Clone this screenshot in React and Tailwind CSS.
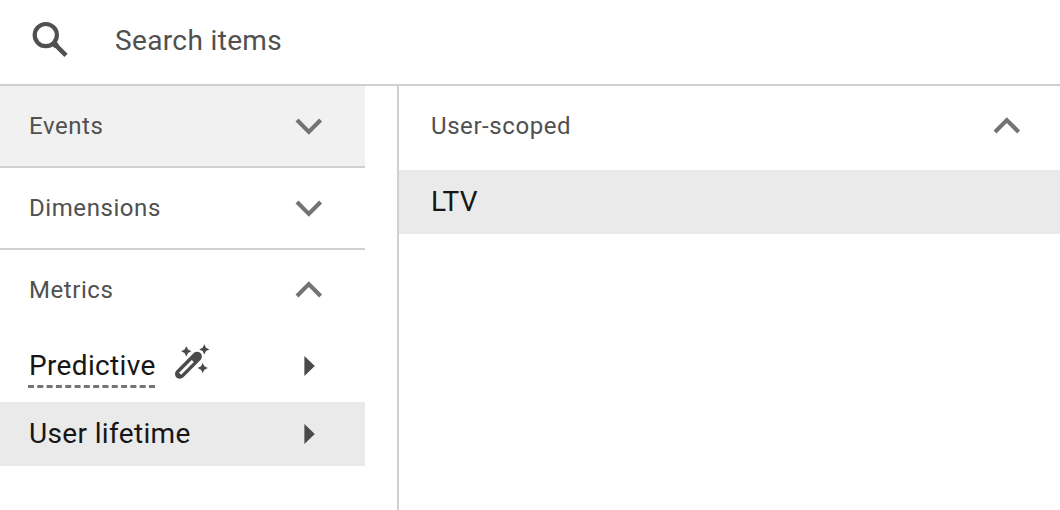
import React from "react";

const SearchIcon = () => (
  <svg width="36" height="36" viewBox="0 0 36 36" fill="none" stroke="#505050">
    <circle cx="13.8" cy="14.1" r="11.1" strokeWidth="4.2" />
    <path d="M20.5 20.9L34 34.4" strokeWidth="4.5" />
    <path d="M21 21.4L24.8 25.2" strokeWidth="5.8" />
  </svg>
);

const Chevron = ({ open }) => (
  <svg
    width="28"
    height="20"
    viewBox="0 0 28 20"
    fill="none"
    stroke="#737373"
    strokeWidth="4.2"
  >
    <path d={open ? "M2 15.9L13.8 4.1L25.6 15.9" : "M2 4.1L13.8 15.9L25.6 4.1"} />
  </svg>
);

const Arrow = () => (
  <svg width="12" height="20" viewBox="0 0 12 20" fill="#4a4a4a">
    <path d="M0.4 0L10.8 10L0.4 20z" />
  </svg>
);

const Wand = () => (
  <svg width="36" height="36" viewBox="0 0 36 36" fill="#4a4a4a">
    <path
      d="M5.9 29.9L23 12.6"
      stroke="#4a4a4a"
      strokeWidth="9.8"
      strokeLinecap="round"
    />
    <path d="M6.1 29.7L18.8 17" stroke="#fff" strokeWidth="2.9" />
    <path d="M12.3 2.2l1.7 3.4 3.4 1.7-3.4 1.7-1.7 3.4-1.7-3.4-3.4-1.7 3.4-1.7z" />
    <path d="M30.3 .3l1.7 3.4 3.4 1.7-3.4 1.7-1.7 3.4-1.7-3.4-3.4-1.7 3.4-1.7z" />
    <path d="M28.7 18.9l1.7 3.4 3.4 1.7-3.4 1.7-1.7 3.4-1.7-3.4-3.4-1.7 3.4-1.7z" />
  </svg>
);

const secciones = [
  { nombre: "Events", clase: "h-[82px] bg-[#f1f1f1] border-b-2", open: false },
  { nombre: "Dimensions", clase: "h-[82px] border-b-2", open: false },
  { nombre: "Metrics", clase: "h-[80px]", open: true },
];

const App = () => {
  return (
    <div className="flex h-[510px] w-[1060px] flex-col overflow-hidden bg-white font-[Roboto,sans-serif]">
      {/* Buscador */}
      <div className="flex h-[86px] shrink-0 items-center border-b-2 border-[#d0d0d0] pl-8">
        <span className="pb-[6px]">
          <SearchIcon />
        </span>
        <span className="ml-[47px] pb-[2px] text-[28px] tracking-[0.36px] text-[#505050]">
          Search items
        </span>
      </div>

      <div className="flex flex-1">
        {/* Categorías */}
        <div className="w-[365px]">
          {secciones.map((s) => (
            <div
              key={s.nombre}
              className={`flex items-center justify-between border-[#d0d0d0] pl-[29px] pr-[42px] ${s.clase}`}
            >
              <span className="text-2xl tracking-[0.57px] text-[#505050]">
                {s.nombre}
              </span>
              <Chevron open={s.open} />
            </div>
          ))}
          <div className="flex h-[72px] items-center pl-[28px] pr-[49px]">
            <span className="w-[127px] border-b-3 border-dashed border-[#757575] pl-px pt-[2px] text-[28px] leading-[38px] tracking-[0.35px] text-[#161616]">
              Predictive
            </span>
            <span className="ml-[19px] pb-[8px]">
              <Wand />
            </span>
            <span className="ml-auto">
              <Arrow />
            </span>
          </div>
          <div className="flex h-16 items-center justify-between bg-[#eaeaea] pl-[29px] pr-[49px]">
            <span className="text-[28px] tracking-[0.35px] text-[#161616]">
              User lifetime
            </span>
            <Arrow />
          </div>
        </div>

        {/* Detalle */}
        <div className="ml-8 flex-1 border-l-2 border-[#d0d0d0]">
          <div className="flex h-[84px] items-center justify-between pb-1 pl-8 pr-[39px]">
            <span className="text-2xl tracking-[0.57px] text-[#505050]">
              User-scoped
            </span>
            <Chevron open />
          </div>
          <div className="flex h-16 items-center bg-[#eaeaea] pl-8 text-[28px] tracking-[0.2px] text-[#161616]">
            LTV
          </div>
        </div>
      </div>
    </div>
  );
};

export default App;
